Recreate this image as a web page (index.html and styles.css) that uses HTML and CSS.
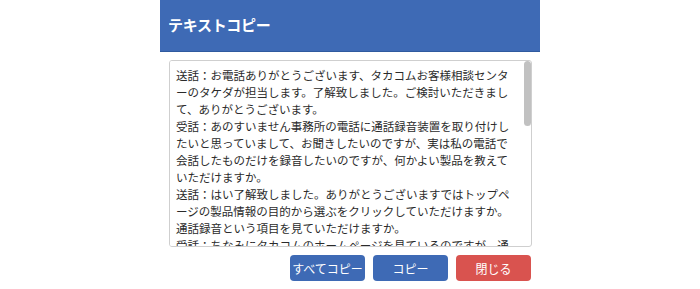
FILE: index.html
```html
<!DOCTYPE html>
<html lang="ja">
<head>
<meta charset="utf-8">
<title>テキストコピー</title>
<link rel="stylesheet" href="styles.css">
</head>
<body>
<div class="dialog">
  <div class="dialog-header">
    <h1 class="dialog-title">テキストコピー</h1>
  </div>
  <div class="dialog-body">
    <div class="text-box">
      <textarea class="copy-text" readonly>送話：お電話ありがとうございます、タカコムお客様相談センタ
ーのタケダが担当します。了解致しました。ご検討いただきまし
て、ありがとうございます。
受話：あのすいません事務所の電話に通話録音装置を取り付けし
たいと思っていまして、お聞きしたいのですが、実は私の電話で
会話したものだけを録音したいのですが、何かよい製品を教えて
いただけますか。
送話：はい了解致しました。ありがとうございますではトップペ
ージの製品情報の目的から選ぶをクリックしていただけますか。
通話録音という項目を見ていただけますか。
受話：ちなみにタカコムのホームページを見ているのですが、通話
録音のところですね。
送話：はい、そちらに事務所向けの通話録音装置がございます。
受話：電話機は何台でも対応できますか。
送話：はい、回線数に応じて機種をお選びいただけます。</textarea>
      <div class="scroll-track">
        <div class="scroll-thumb"></div>
      </div>
    </div>
  </div>
  <div class="dialog-footer">
    <button class="btn btn-primary" type="button">すべてコピー</button>
    <button class="btn btn-primary" type="button">コピー</button>
    <button class="btn btn-danger" type="button">閉じる</button>
  </div>
</div>
</body>
</html>
```

FILE: styles.css
```css
html, body {
  margin: 0;
  padding: 0;
  background: #ffffff;
}

body {
  font-family: "Noto Sans CJK JP", "Noto Sans", sans-serif;
  color: #333333;
}

.dialog {
  width: 380px;
  margin: 0 auto;
  background: #ffffff;
}

.dialog-header {
  height: 51px;
  background: #3e6ab5;
  border-bottom: 1px solid #2f5a9f;
  display: flex;
  align-items: center;
  padding: 0 8px;
}

.dialog-title {
  margin: 0;
  font-size: 15px;
  font-weight: bold;
  color: #ffffff;
  line-height: 1;
  padding-bottom: 2px;
  letter-spacing: -0.3px;
}

.dialog-body {
  padding: 8px 8px 0 9px;
}

.text-box {
  display: flex;
  box-sizing: border-box;
  width: 363px;
  height: 187px;
  border: 1px solid #cfcfcf;
  border-radius: 3px;
  overflow: hidden;
}

.copy-text {
  flex: 1;
  display: block;
  box-sizing: border-box;
  height: 100%;
  margin: 0;
  padding: 6px 6px 6px 6px;
  border: none;
  resize: none;
  font-family: "Noto Sans CJK JP", "Noto Sans", sans-serif;
  font-size: 11.5px;
  line-height: 17px;
  color: #2b2b2b;
  white-space: pre-wrap;
  overflow: hidden;
  outline: none;
  background: #ffffff;
}

.scroll-track {
  width: 8px;
  flex-shrink: 0;
  display: flex;
  justify-content: flex-end;
}

.scroll-thumb {
  width: 7px;
  height: 65px;
  background: #c1c1c1;
  border-radius: 4px;
}

.dialog-footer {
  display: flex;
  justify-content: flex-end;
  gap: 8px;
  padding: 8px 9px 0 0;
}

.btn {
  width: 75px;
  height: 26px;
  border: none;
  border-radius: 4px;
  color: #ffffff;
  font-family: "Noto Sans CJK JP", "Noto Sans", sans-serif;
  font-size: 12px;
  padding: 0;
  cursor: pointer;
}

.btn-primary {
  background: #3e6ab5;
}

.btn-danger {
  background: #d9534f;
}
```
